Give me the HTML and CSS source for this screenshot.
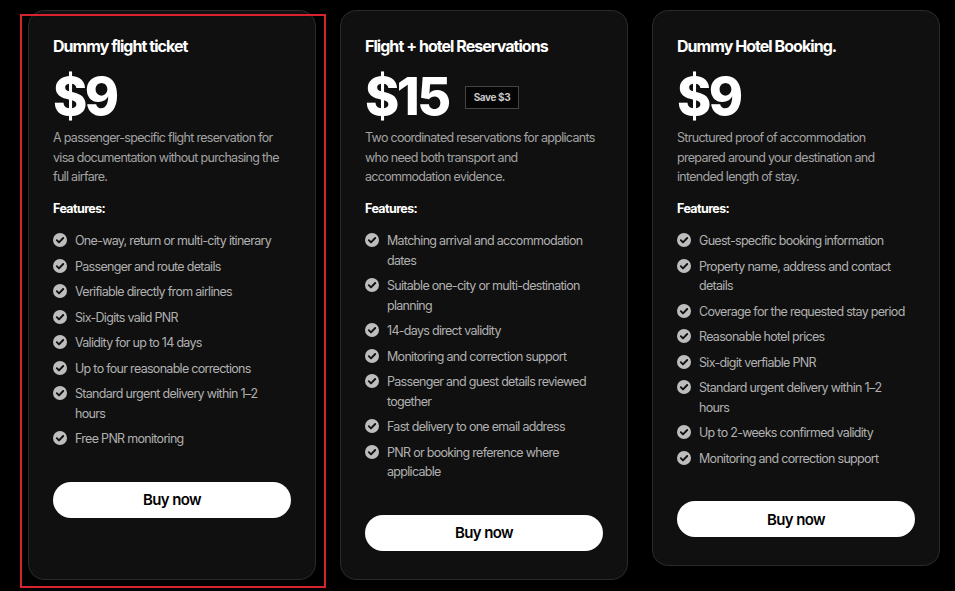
FILE: index.html
```html
<!DOCTYPE html>
<html lang="en">
<head>
    <meta charset="UTF-8">
    <meta name="viewport" content="width=device-width, initial-scale=1.0">
    <title>Pricing</title>
    <link rel="stylesheet" href="styles.css">
</head>
<body>
    <div class="pricing">
        <div class="plan plan-selected">
            <h2>Dummy flight ticket</h2>
            <div class="price-row"><span class="price">$9</span></div>
            <p class="desc">A passenger-specific flight reservation for visa documentation without purchasing the full airfare.</p>
            <div class="features-title">Features:</div>
            <ul class="features">
                <li>One-way, return or multi-city itinerary</li>
                <li>Passenger and route details</li>
                <li>Verifiable directly from airlines</li>
                <li>Six-Digits valid PNR</li>
                <li>Validity for up to 14 days</li>
                <li>Up to four reasonable corrections</li>
                <li>Standard urgent delivery within 1–2 hours</li>
                <li>Free PNR monitoring</li>
            </ul>
            <button class="buy">Buy now</button>
            <div class="highlight"></div>
        </div>

        <div class="plan">
            <h2>Flight + hotel Reservations</h2>
            <div class="price-row"><span class="price">$15</span><span class="save">Save $3</span></div>
            <p class="desc">Two coordinated reservations for applicants who need both transport and accommodation evidence.</p>
            <div class="features-title">Features:</div>
            <ul class="features">
                <li>Matching arrival and accommodation dates</li>
                <li>Suitable one-city or multi-destination planning</li>
                <li>14-days direct validity</li>
                <li>Monitoring and correction support</li>
                <li>Passenger and guest details reviewed together</li>
                <li>Fast delivery to one email address</li>
                <li>PNR or booking reference where applicable</li>
            </ul>
            <button class="buy">Buy now</button>
        </div>

        <div class="plan">
            <h2>Dummy Hotel Booking.</h2>
            <div class="price-row"><span class="price">$9</span></div>
            <p class="desc">Structured proof of accommodation prepared around your destination and intended length of stay.</p>
            <div class="features-title">Features:</div>
            <ul class="features">
                <li>Guest-specific booking information</li>
                <li>Property name, address and contact details</li>
                <li>Coverage for the requested stay period</li>
                <li>Reasonable hotel prices</li>
                <li>Six-digit verfiable PNR</li>
                <li>Standard urgent delivery within 1–2 hours</li>
                <li>Up to 2-weeks confirmed validity</li>
                <li>Monitoring and correction support</li>
            </ul>
            <button class="buy">Buy now</button>
        </div>
    </div>
</body>
</html>
```

FILE: styles.css
```css
html, body {
    height: 100%;
}
body {
    margin: 0;
    padding: 0;
    background: #000;
    color: #fff;
    font-family: Inter, "Liberation Sans", Arial, sans-serif;
    overflow: hidden;
}
.pricing {
    display: grid;
    grid-template-columns: repeat(3, 288px);
    column-gap: 24px;
    align-items: start;
    padding: 10px 0 12px 28px;
}
.plan {
    position: relative;
    box-sizing: border-box;
    background: #101010;
    border: 1px solid #2b2b2b;
    border-radius: 16px;
    padding: 24px 24px 28px;
}
.plan-selected {
    align-self: stretch;
}
.highlight {
    position: absolute;
    left: -9px;
    top: 3px;
    right: -11px;
    bottom: -9px;
    border: 2px solid #d8232f;
    pointer-events: none;
}
.plan h2 {
    margin: 0;
    font-size: 16px;
    line-height: 22px;
    font-weight: 700;
    letter-spacing: -0.95px;
}
.price-row {
    display: flex;
    align-items: center;
    gap: 16px;
    margin-top: 12px;
    height: 56px;
}
.price {
    font-size: 52px;
    line-height: 56px;
    font-weight: 800;
    letter-spacing: -2.5px;
}
.save {
    display: inline-block;
    border: 1px solid #444;
    background: #050505;
    color: #c8c8c8;
    font-size: 10px;
    font-weight: 700;
    letter-spacing: -0.4px;
    padding: 5px 8px;
    line-height: 11px;
}
.desc {
    margin: 3px 0 0;
    font-size: 12.5px;
    line-height: 19.5px;
    color: #a3a3a3;
    letter-spacing: -0.7px;
}
.features-title {
    margin-top: 12px;
    font-size: 12.5px;
    line-height: 19.5px;
    font-weight: 700;
    letter-spacing: -0.6px;
}
.features {
    list-style: none;
    margin: 13px 0 0;
    padding: 0;
    display: flex;
    flex-direction: column;
    gap: 6px;
}
.features li {
    position: relative;
    padding: 0 6px 0 22px;
    font-size: 12.5px;
    line-height: 19.5px;
    color: #b0b0b0;
    letter-spacing: -0.7px;
}
.features li::before {
    content: "";
    position: absolute;
    left: 0;
    top: 2px;
    width: 14px;
    height: 14px;
    background: url("data:image/svg+xml,%3Csvg xmlns='http://www.w3.org/2000/svg' viewBox='0 0 14 14'%3E%3Ccircle cx='7' cy='7' r='7' fill='%23bdbdbd'/%3E%3Cpath d='M3.8 7.2l2.2 2.2 4.2-4.4' fill='none' stroke='%23101010' stroke-width='1.9' stroke-linecap='round' stroke-linejoin='round'/%3E%3C/svg%3E") no-repeat center/contain;
}
.buy {
    display: block;
    width: 100%;
    height: 36px;
    margin-top: 33px;
    border: none;
    border-radius: 18px;
    background: #fff;
    color: #000;
    font-family: inherit;
    font-size: 15px;
    font-weight: 600;
    letter-spacing: -0.6px;
    cursor: pointer;
}
```
